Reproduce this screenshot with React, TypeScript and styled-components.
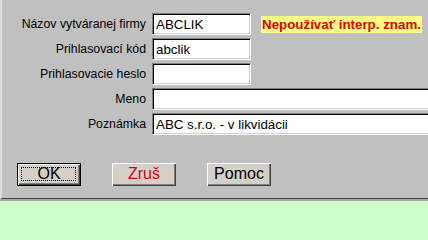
import styled, { createGlobalStyle } from "styled-components";

const GlobalStyle = createGlobalStyle`
    html, body {
        margin: 0;
        padding: 0;
        overflow: hidden;
        background: #ccffcc;
    }
    body {
        font-family: "Liberation Sans", Arial, sans-serif;
    }
`;

const Page = styled.div`
    display: flex;
    flex-direction: column;
    width: 100%;
    min-height: 100vh;
    overflow: hidden;
`;

const Dialog = styled.div`
    flex: 0 0 199px;
    box-sizing: border-box;
    background: #c0c0c0;
    border-left: 2px solid #dedede;
    border-bottom: 1px solid #404040;
    padding-top: 13px;
`;

const Footer = styled.div`
    flex: 1;
    background: #ccffcc;
    border-top: 2px solid #a8a8a8;
`;

const Form = styled.div`
    display: grid;
    grid-template-columns: 144px 1fr;
    column-gap: 6px;
    row-gap: 3px;
    grid-auto-rows: 22px;
`;

const Label = styled.label`
    display: flex;
    align-items: center;
    justify-content: flex-end;
    font-size: 12.3px;
    color: #000;
    white-space: nowrap;
`;

const Field = styled.div`
    display: flex;
    align-items: center;
    gap: 10px;
    min-width: 0;
`;

const Input = styled.input<{ $wide?: boolean }>`
    box-sizing: border-box;
    flex: none;
    width: ${(p) => (p.$wide ? "300px" : "99px")};
    height: 22px;
    margin: 0;
    padding: 1px 3px 0;
    background: #fff;
    border: 1px solid;
    border-color: #808080 #ffffff #ffffff #808080;
    box-shadow: inset 1px 1px #000, inset -1px -1px #d4d0c8;
    font-family: "Liberation Sans", Arial, sans-serif;
    font-size: 13.33px;
    color: #000;
    outline: none;
`;

const Warning = styled.span`
    flex: none;
    background: #ffff88;
    color: #e00000;
    font-weight: bold;
    font-size: 13.33px;
    line-height: 17px;
    padding: 0 1px;
    white-space: nowrap;
`;

const Buttons = styled.div`
    display: flex;
    gap: 31px;
    padding-left: 15px;
    margin-top: 28px;
`;

const Button = styled.button<{ $default?: boolean; $danger?: boolean }>`
    position: relative;
    box-sizing: border-box;
    width: 64px;
    height: 23px;
    margin: 0;
    padding: 0 0 1px;
    background: #d4d0c8;
    border: ${(p) => (p.$default ? "1px solid #000" : "none")};
    box-shadow: inset 1px 1px #ffffff, inset -1px -1px #404040, inset -2px -2px #808080;
    font-family: "Liberation Sans", Arial, sans-serif;
    font-size: 16px;
    font-weight: normal;
    line-height: 18px;
    color: ${(p) => (p.$danger ? "#d4001c" : "#000")};
    cursor: default;

    &::after {
        content: "";
        display: ${(p) => (p.$default ? "block" : "none")};
        position: absolute;
        left: 3px;
        top: 3px;
        right: 4px;
        bottom: 4px;
        border: 1px dotted #000;
    }
`;

export default function App() {
    return (
        <>
            <GlobalStyle />
            <Page>
                <Dialog>
                    <Form>
                        <Label>Názov vytváranej firmy</Label>
                        <Field>
                            <Input defaultValue="ABCLIK" />
                            <Warning>Nepoužívať interp. znam.</Warning>
                        </Field>
                        <Label>Prihlasovací kód</Label>
                        <Field>
                            <Input defaultValue="abclik" />
                        </Field>
                        <Label>Prihlasovacie heslo</Label>
                        <Field>
                            <Input type="password" />
                        </Field>
                        <Label>Meno</Label>
                        <Field>
                            <Input $wide />
                        </Field>
                        <Label>Poznámka</Label>
                        <Field>
                            <Input $wide defaultValue="ABC s.r.o. - v likvidácii" />
                        </Field>
                    </Form>
                    <Buttons>
                        <Button $default>OK</Button>
                        <Button $danger>Zruš</Button>
                        <Button>Pomoc</Button>
                    </Buttons>
                </Dialog>
                <Footer />
            </Page>
        </>
    );
}
